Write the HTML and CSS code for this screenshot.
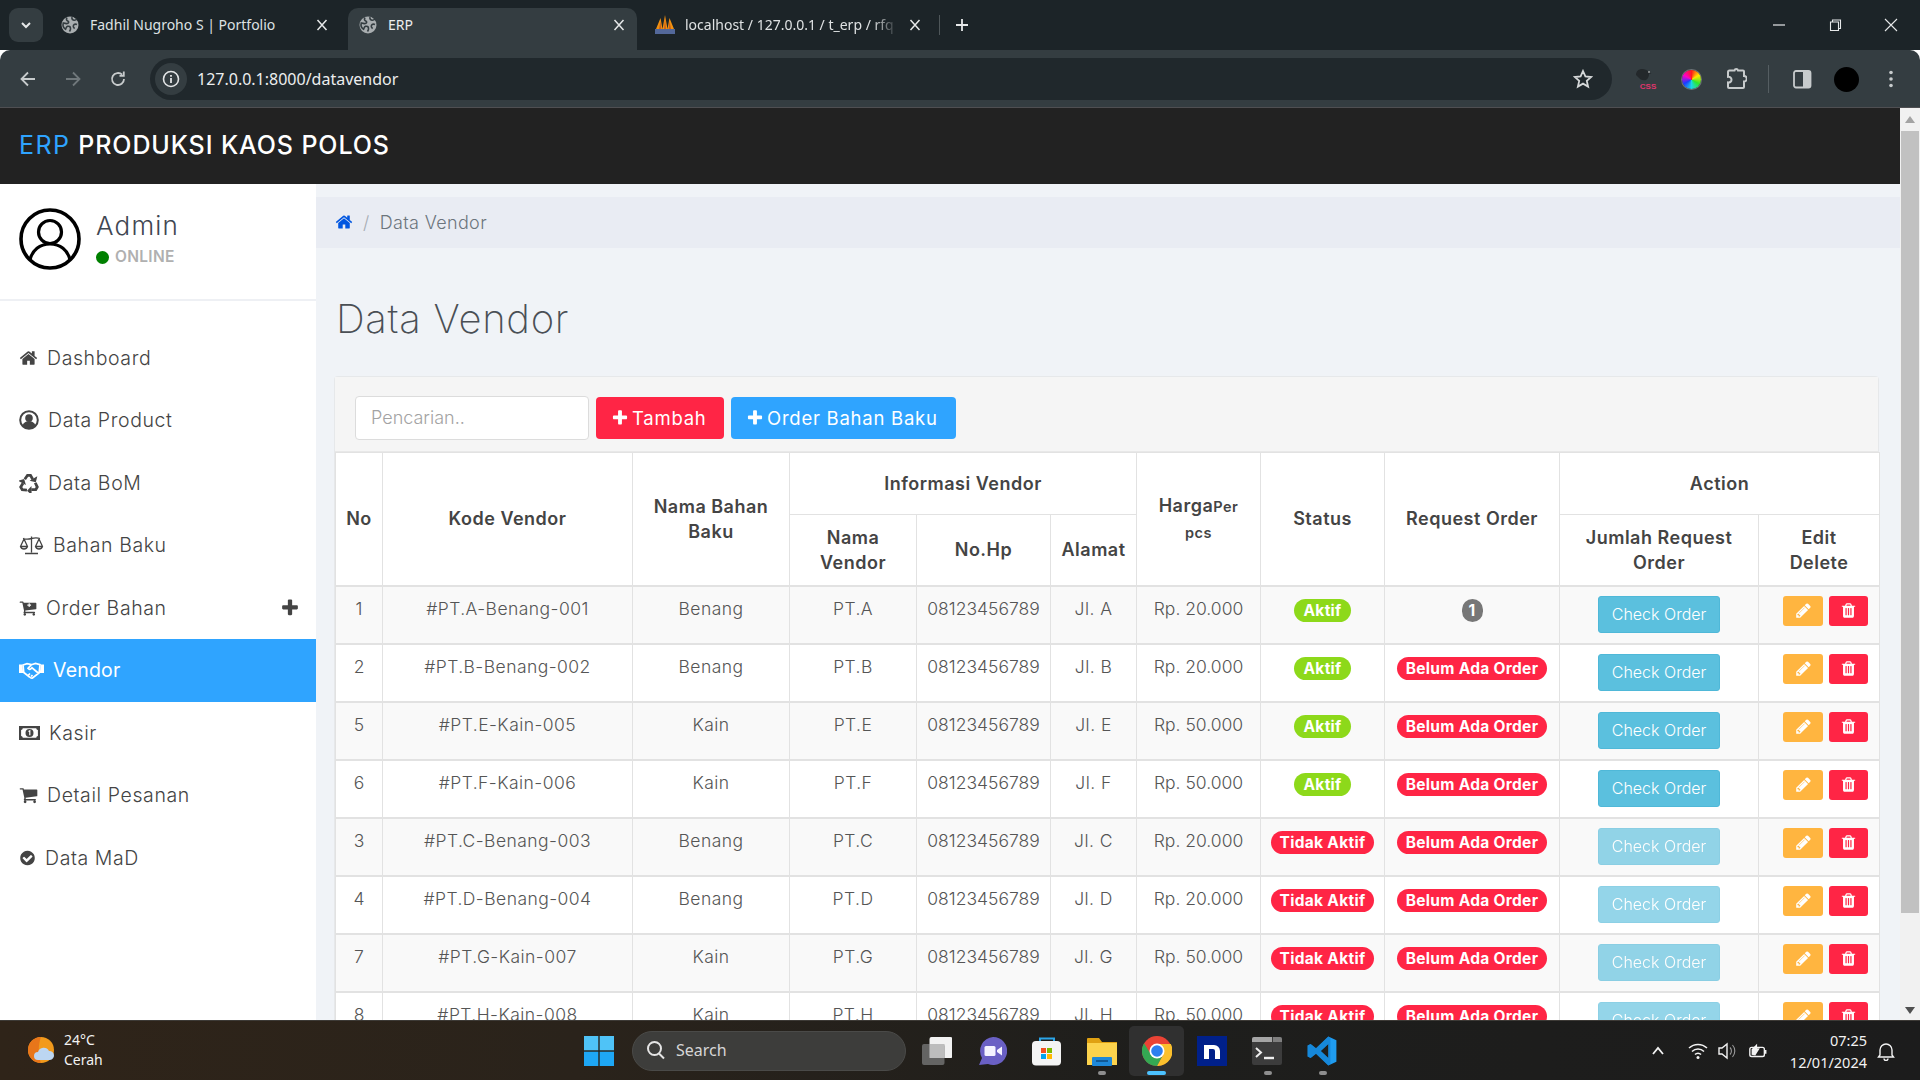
FILE: index.html
```html
<!DOCTYPE html>
<html lang="id">
<head>
<meta charset="utf-8">
<title>ERP</title>
<link rel="stylesheet" href="styles.css">
</head>
<body>
<svg class="defs" aria-hidden="true">
  <symbol id="i-home" viewBox="0 0 1792 1792"><path d="M1472 992v480q0 26-19 45t-45 19h-384v-384h-256v384h-384q-26 0-45-19t-19-45v-480q0-1 .5-3t.5-3l575-474 575 474q1 2 1 6zm223-69l-62 74q-8 9-21 11h-3q-13 0-21-7l-692-577-692 577q-12 8-24 7-13-2-21-11l-62-74q-8-10-7-23.500t11-21.500l719-599q32-26 76-26t76 26l244 204v-195q0-14 9-23t23-9h192q14 0 23 9t9 23v408l219 182q10 8 11 21.500t-7 23.500z"/></symbol>
  <symbol id="i-plus" viewBox="0 0 1792 1792"><path d="M1600 736v192q0 40-28 68t-68 28h-416v416q0 40-28 68t-68 28h-192q-40 0-68-28t-28-68v-416h-416q-40 0-68-28t-28-68v-192q0-40 28-68t68-28h416v-416q0-40 28-68t68-28h192q40 0 68 28t28 68v416h416q40 0 68 28t28 68z"/></symbol>
  <symbol id="i-cart" viewBox="0 0 1792 1792"><path d="M704 1536q0 52-38 90t-90 38-90-38-38-90 38-90 90-38 90 38 38 90zm896 0q0 52-38 90t-90 38-90-38-38-90 38-90 90-38 90 38 38 90zm128-1088v512q0 24-16.500 42.500t-40.500 21.500l-1044 122q13 60 13 70 0 16-24 64h920q26 0 45 19t19 45-19 45-45 19h-1024q-26 0-45-19t-19-45q0-11 8-31.500t16-36 21.500-40 15.500-29.500l-177-823h-204q-26 0-45-19t-19-45 19-45 45-19h256q16 0 28.500 6.500t19.500 15.500 13 24.500 8 26 5.500 29.500 4.500 26h1201q26 0 45 19t19 45z"/></symbol>
  <symbol id="i-check" viewBox="0 0 1792 1792"><path d="M1412 734q0-28-18-46l-91-90q-19-19-45-19t-45 19l-408 407-226-226q-19-19-45-19t-45 19l-91 90q-18 18-18 46 0 27 18 45l362 362q19 19 45 19 27 0 46-19l543-543q18-18 18-45zm252 162q0 209-103 385.500t-279.500 279.500-385.500 103-385.500-103-279.500-279.500-103-385.500 103-385.500 279.500-279.500 385.500-103 385.500 103 279.500 279.500 103 385.500z"/></symbol>
  <symbol id="i-pencil" viewBox="0 0 1792 1792"><path d="M491 1536l91-91-235-235-91 91v107h128v128h107zm523-928q0-22-22-22-10 0-17 7l-542 542q-7 7-7 17 0 22 22 22 10 0 17-7l542-542q7-7 7-17zm-54-192l416 416-832 832h-416v-416zm683 96q0 53-37 90l-166 166-416-416 166-165q36-38 90-38 53 0 91 38l235 234q37 39 37 91z"/></symbol>
  <symbol id="i-trash" viewBox="0 0 1792 1792"><path d="M704 1376v-704q0-14-9-23t-23-9h-64q-14 0-23 9t-9 23v704q0 14 9 23t23 9h64q14 0 23-9t9-23zm256 0v-704q0-14-9-23t-23-9h-64q-14 0-23 9t-9 23v704q0 14 9 23t23 9h64q14 0 23-9t9-23zm256 0v-704q0-14-9-23t-23-9h-64q-14 0-23 9t-9 23v704q0 14 9 23t23 9h64q14 0 23-9t9-23zm-544-992h448l-48-117q-7-9-17-11h-317q-10 2-17 11zm928 32v64q0 14-9 23t-23 9h-96v948q0 83-47 143.500t-113 60.500h-832q-66 0-113-58.500t-47-141.500v-952h-96q-14 0-23-9t-9-23v-64q0-14 9-23t23-9h309l70-167q15-37 54-63t79-26h320q40 0 79 26t54 63l70 167h309q14 0 23 9t9 23z"/></symbol>
  <symbol id="i-globe" viewBox="0 0 18 18"><circle cx="9" cy="9" r="8.500" fill="#a9aeb0"/><path d="M6 1.500c-1 1.800-.5 3 .8 3.600 1.200.5 1 1.700.1 2.200-1.400.8-3 .2-4.600-.3-.8 2.800.2 5 2.300 6.200.6-1.300.7-2.500 2-2.900 1.500-.4 2.700.4 2.900 1.700.2 1.200-.3 2.500-1 3.500M11 1.200c-.3 1.400.2 2.400 1.300 2.800 1.400.5 2.700 0 3.700-1M16 8.500c-1.400-.6-2.900-.4-3.600.8-.7 1.300.3 2.400 1.200 3.300" fill="none" stroke="#343d41" stroke-width="1.600"/></symbol>
  <symbol id="i-close" viewBox="0 0 14 14"><path d="M2.500 2l9 10M11.500 2l-9 10" fill="none" stroke="currentColor" stroke-width="1.500"/></symbol>
  <symbol id="i-recycle" viewBox="0 0 20 20"><g id="rc"><path d="M5.800 6.200L8.500 2.300h3l2.200 3.900" fill="none" stroke="currentColor" stroke-width="2.800"/><path d="M10.600 7.800l6.200 1.500 1.500-6.100z"/></g><path transform="rotate(120 10 11)" d="M5.800 6.200L8.500 2.300h3l2.200 3.900" fill="none" stroke="currentColor" stroke-width="2.800"/><path transform="rotate(120 10 11)" d="M10.600 7.800l6.200 1.500 1.500-6.100z"/><path transform="rotate(240 10 11)" d="M5.800 6.200L8.500 2.300h3l2.200 3.900" fill="none" stroke="currentColor" stroke-width="2.800"/><path transform="rotate(240 10 11)" d="M10.600 7.800l6.200 1.500 1.500-6.100z"/></symbol>
</svg>

<header class="tabstrip">
  <button class="tab-search" type="button" aria-label="Cari tab"><svg class="ic-12" viewBox="0 0 12 12"><path d="M2 4l4 4 4-4" fill="none" stroke="#e6e8e9" stroke-width="2"/></svg></button>
  <div class="tab tab-a">
    <svg class="favicon"><use href="#i-globe"/></svg>
    <span class="tab-title">Fadhil Nugroho S | Portfolio</span>
    <svg class="tab-x"><use href="#i-close"/></svg>
  </div>
  <div class="tab tab-b">
    <svg class="favicon"><use href="#i-globe"/></svg>
    <span class="tab-title">ERP</span>
    <svg class="tab-x"><use href="#i-close"/></svg>
  </div>
  <div class="tab tab-c">
    <svg class="favicon-pma" viewBox="0 0 20 20"><path d="M1 14L5.500 3 7.500 14zM7.500 14L10 0l2.500 14zM12.500 14L14.500 3 19 14z" fill="#f29111"/><path d="M0 14h20v5H0z" fill="#53689a"/><path d="M10 3l1 11H9zM5.500 6l.8 8H4zM14.500 6l1.500 8h-2.300z" fill="#c9611a"/></svg>
    <span class="tab-title tab-fade">localhost / 127.0.0.1 / t_erp / rfq</span>
    <svg class="tab-x"><use href="#i-close"/></svg>
  </div>
  <span class="tab-sep"></span>
  <svg class="tab-plus" viewBox="0 0 14 14"><path d="M7 1v12M1 7h12" fill="none" stroke="#e6e8e9" stroke-width="1.800"/></svg>
  <div class="win-controls">
    <svg class="win-ic" viewBox="0 0 14 14"><path d="M1 7h12" stroke="#e6e8e9" stroke-width="1.200"/></svg>
    <svg class="win-ic" viewBox="0 0 14 14"><path d="M2.500 4h8v8.500h-8zM4.500 4V2h8v8.500h-2" fill="none" stroke="#e6e8e9" stroke-width="1.100"/></svg>
    <svg class="win-ic" viewBox="0 0 14 14"><path d="M1 1l12 12M13 1L1 13" fill="none" stroke="#e6e8e9" stroke-width="1.100"/></svg>
  </div>
</header>

<div class="toolbar">
  <svg class="nav-ic" viewBox="0 0 18 18"><path d="M16 9H3M9 2.500L2.500 9 9 15.500" fill="none" stroke="#c7cbcc" stroke-width="1.800"/></svg>
  <svg class="nav-ic" viewBox="0 0 18 18"><path d="M2 9h13M9 2.500L15.500 9 9 15.500" fill="none" stroke="#70787b" stroke-width="1.800"/></svg>
  <svg class="nav-ic" viewBox="0 0 18 18"><path d="M15 9a6 6 0 1 1-1.800-4.300M14.800 1.500v4.300h-4.300" fill="none" stroke="#c7cbcc" stroke-width="1.800"/></svg>
  <div class="omnibox">
    <span class="site-info"><svg class="ic-18" viewBox="0 0 18 18"><circle cx="9" cy="9" r="7.500" fill="none" stroke="#e3e5e6" stroke-width="1.600"/><path d="M9 8v5M9 5v1.800" stroke="#e3e5e6" stroke-width="1.800"/></svg></span>
    <span class="url">127.0.0.1:8000/datavendor</span>
    <svg class="star" viewBox="0 0 20 20"><path d="M10 2l2.400 5.400 5.800.6-4.400 3.900 1.300 5.700-5.100-3-5.100 3 1.300-5.700L1.800 8l5.800-.6z" fill="none" stroke="#d5d8d9" stroke-width="1.800"/></svg>
  </div>
  <div class="ext-row">
    <span class="ext"><svg class="ic-24" viewBox="0 0 24 24"><path d="M1 8c0-4 3-6 6-6 3 0 5 1 6.500 2.500l3 2.500-2.500-.5c0 3-1 5.500-3 6.500-3 1-6-.5-8-3z" fill="#23282b"/><circle cx="14" cy="5" r=".8" fill="#e8e8e8"/><text x="13" y="21.500" class="css-mark">CSS</text></svg></span>
    <span class="ext ext-wheel"><span class="wheel"></span></span>
    <span class="ext"><svg class="ic-24" viewBox="0 0 24 24"><path d="M10 3.500h1.500a1.800 1.800 0 0 1 3.500 0H20a1 1 0 0 1 1 1V9a2.700 2.700 0 0 1 0 5.500V20a1 1 0 0 1-1 1H6a1 1 0 0 1-1-1v-4.500c2 .3 3.500-1 3.500-2.800S7 9.500 5 9.800V5a1.500 1.500 0 0 1 1.500-1.500z" fill="none" stroke="#c7cbcc" stroke-width="2"/></svg></span>
    <span class="ext-sep"></span>
    <span class="ext"><svg class="ic-24" viewBox="0 0 24 24"><rect x="4" y="4" width="16.500" height="16.500" rx="2" fill="none" stroke="#c7cbcc" stroke-width="1.800"/><path d="M13 4h5.500a2 2 0 0 1 2 2v12.500a2 2 0 0 1-2 2H13z" fill="#c7cbcc"/></svg></span>
    <span class="profile"></span>
    <span class="ext"><svg class="ic-24" viewBox="0 0 24 24"><circle cx="12" cy="5.500" r="1.800" fill="#c7cbcc"/><circle cx="12" cy="12" r="1.800" fill="#c7cbcc"/><circle cx="12" cy="18.500" r="1.800" fill="#c7cbcc"/></svg></span>
  </div>
</div>

<div class="viewport">
  <div class="page">
    <div class="app-header"><span class="brand-a">ERP</span> PRODUKSI KAOS POLOS</div>
    <div class="app-body">
      <aside class="sidebar">
        <div class="user-panel">
          <svg class="avatar" viewBox="0 0 62 62"><circle cx="31" cy="31" r="29" fill="none" stroke="#000" stroke-width="3.600"/><circle cx="31" cy="24" r="11.500" fill="none" stroke="#000" stroke-width="3.200"/><path d="M11 52c2-10 10-16 20-16s18 6 20 16" fill="none" stroke="#000" stroke-width="3.200"/></svg>
          <div class="user-text">
            <div class="user-name">Admin</div>
            <div class="user-status"><span class="dot"></span>ONLINE</div>
          </div>
        </div>
        <nav class="menu">
          <a class="menu-item"><svg class="m-ic w19"><use href="#i-home"/></svg>Dashboard</a>
          <a class="menu-item"><svg class="m-ic w20" viewBox="0 0 20 20"><circle cx="10" cy="10" r="8.800" fill="none" stroke="#444" stroke-width="2"/><circle cx="10" cy="8" r="3.800"/><path d="M3.500 15.500c1-3 3.500-4.500 6.500-4.500s5.500 1.500 6.500 4.500c-1.500 2-3.800 3.500-6.500 3.500s-5-1.500-6.500-3.500z"/></svg>Data Product</a>
          <a class="menu-item"><svg class="m-ic w20"><use href="#i-recycle"/></svg>Data BoM</a>
          <a class="menu-item"><svg class="m-ic w25" viewBox="0 0 25 20"><path d="M12.500 1.500v16M6 18.500h13M4 3.500c3 1 5.500.8 8.500 0s5.500-1 8.500 0M5 4L1.500 11.500a3.700 3.700 0 0 0 7 0zM20 4l-3.500 7.500a3.700 3.700 0 0 0 7 0zM1.500 11.500h7M16.500 11.500h7" fill="none" stroke="#444" stroke-width="1.300"/></svg>Bahan Baku</a>
          <a class="menu-item menu-has-sub"><svg class="m-ic w18" viewBox="0 0 1792 1792"><use href="#i-cart" width="1792" height="1792"/><path d="M960 420v130H830v110h130v130h110V660h130V550h-130V420z" fill="#fff"/></svg>Order Bahan<svg class="m-plus"><use href="#i-plus"/></svg></a>
          <a class="menu-item is-active"><svg class="m-ic w25" viewBox="0 0 25 20"><path d="M0 4.500h3.200l1 8.500H0zM25 4.500h-3.200l-1 8.500H25z"/><path d="M4 5l4-1.300 4.500 1 4-1.300 4.500 1.300-.8 8-6.700 5.300c-1.300.6-2.300-.3-3-1L4.800 12.500zM12.500 4.700L9 8.300c1 1.500 2.700 1.300 4-.5l6.200 5.200M9.500 15l1.500-1.500M12 16.500l1.500-1.500" fill="none" stroke="currentColor" stroke-width="1.700"/></svg>Vendor</a>
          <a class="menu-item"><svg class="m-ic w21" viewBox="0 0 21 16"><path fill-rule="evenodd" d="M0 1h21v14H0zM3.800 3.200a2 2 0 0 1-1.700 1.700v6.200a2 2 0 0 1 1.700 1.700h13.400a2 2 0 0 1 1.700-1.700V4.900a2 2 0 0 1-1.700-1.700z"/><circle cx="10.500" cy="8" r="4"/><path d="M9.500 6.500l1.300-.8v4.500" fill="none" stroke="#fff" stroke-width="1.200"/></svg>Kasir</a>
          <a class="menu-item"><svg class="m-ic w19"><use href="#i-cart"/></svg>Detail Pesanan</a>
          <a class="menu-item"><svg class="m-ic w17"><use href="#i-check"/></svg>Data MaD</a>
        </nav>
      </aside>
      <main class="main">
        <div class="crumb"><svg class="crumb-home"><use href="#i-home"/></svg><span class="crumb-sep">/</span><span>Data Vendor</span></div>
        <h1 class="page-title">Data Vendor</h1>
        <section class="card">
          <div class="card-tools">
            <input class="search" type="text" placeholder="Pencarian..">
            <button class="btn btn-red" type="button"><svg class="btn-plus"><use href="#i-plus"/></svg>Tambah</button>
            <button class="btn btn-blue" type="button"><svg class="btn-plus"><use href="#i-plus"/></svg>Order Bahan Baku</button>
          </div>
          <table class="grid">
            <colgroup>
              <col class="c-no"><col class="c-kode"><col class="c-nama"><col class="c-vendor"><col class="c-hp"><col class="c-alamat"><col class="c-harga"><col class="c-status"><col class="c-req"><col class="c-jml"><col class="c-edit">
            </colgroup>
            <thead>
              <tr class="head-a">
                <th rowspan="2">No</th>
                <th rowspan="2">Kode Vendor</th>
                <th rowspan="2">Nama Bahan Baku</th>
                <th colspan="3">Informasi Vendor</th>
                <th rowspan="2" class="th-harga">Harga<small>Per pcs</small></th>
                <th rowspan="2">Status</th>
                <th rowspan="2">Request Order</th>
                <th colspan="2">Action</th>
              </tr>
              <tr class="head-b">
                <th>Nama Vendor</th><th>No.Hp</th><th>Alamat</th><th>Jumlah Request Order</th><th class="th-edit">Edit Delete</th>
              </tr>
            </thead>
            <tbody>
              <tr><td>1</td><td>#PT.A-Benang-001</td><td>Benang</td><td>PT.A</td><td>08123456789</td><td>Jl. A</td><td>Rp. 20.000</td><td><span class="pill pill-green">Aktif</span></td><td><span class="pill pill-grey">1</span></td><td><a class="btn-check">Check Order</a></td><td><div class="acts"><a class="act act-o"><svg class="act-ic"><use href="#i-pencil"/></svg></a><a class="act act-r"><svg class="act-ic"><use href="#i-trash"/></svg></a></div></td></tr>
              <tr><td>2</td><td>#PT.B-Benang-002</td><td>Benang</td><td>PT.B</td><td>08123456789</td><td>Jl. B</td><td>Rp. 20.000</td><td><span class="pill pill-green">Aktif</span></td><td><span class="pill pill-red">Belum Ada Order</span></td><td><a class="btn-check">Check Order</a></td><td><div class="acts"><a class="act act-o"><svg class="act-ic"><use href="#i-pencil"/></svg></a><a class="act act-r"><svg class="act-ic"><use href="#i-trash"/></svg></a></div></td></tr>
              <tr><td>5</td><td>#PT.E-Kain-005</td><td>Kain</td><td>PT.E</td><td>08123456789</td><td>Jl. E</td><td>Rp. 50.000</td><td><span class="pill pill-green">Aktif</span></td><td><span class="pill pill-red">Belum Ada Order</span></td><td><a class="btn-check">Check Order</a></td><td><div class="acts"><a class="act act-o"><svg class="act-ic"><use href="#i-pencil"/></svg></a><a class="act act-r"><svg class="act-ic"><use href="#i-trash"/></svg></a></div></td></tr>
              <tr><td>6</td><td>#PT.F-Kain-006</td><td>Kain</td><td>PT.F</td><td>08123456789</td><td>Jl. F</td><td>Rp. 50.000</td><td><span class="pill pill-green">Aktif</span></td><td><span class="pill pill-red">Belum Ada Order</span></td><td><a class="btn-check">Check Order</a></td><td><div class="acts"><a class="act act-o"><svg class="act-ic"><use href="#i-pencil"/></svg></a><a class="act act-r"><svg class="act-ic"><use href="#i-trash"/></svg></a></div></td></tr>
              <tr><td>3</td><td>#PT.C-Benang-003</td><td>Benang</td><td>PT.C</td><td>08123456789</td><td>Jl. C</td><td>Rp. 20.000</td><td><span class="pill pill-red">Tidak Aktif</span></td><td><span class="pill pill-red">Belum Ada Order</span></td><td><a class="btn-check is-off">Check Order</a></td><td><div class="acts"><a class="act act-o"><svg class="act-ic"><use href="#i-pencil"/></svg></a><a class="act act-r"><svg class="act-ic"><use href="#i-trash"/></svg></a></div></td></tr>
              <tr><td>4</td><td>#PT.D-Benang-004</td><td>Benang</td><td>PT.D</td><td>08123456789</td><td>Jl. D</td><td>Rp. 20.000</td><td><span class="pill pill-red">Tidak Aktif</span></td><td><span class="pill pill-red">Belum Ada Order</span></td><td><a class="btn-check is-off">Check Order</a></td><td><div class="acts"><a class="act act-o"><svg class="act-ic"><use href="#i-pencil"/></svg></a><a class="act act-r"><svg class="act-ic"><use href="#i-trash"/></svg></a></div></td></tr>
              <tr><td>7</td><td>#PT.G-Kain-007</td><td>Kain</td><td>PT.G</td><td>08123456789</td><td>Jl. G</td><td>Rp. 50.000</td><td><span class="pill pill-red">Tidak Aktif</span></td><td><span class="pill pill-red">Belum Ada Order</span></td><td><a class="btn-check is-off">Check Order</a></td><td><div class="acts"><a class="act act-o"><svg class="act-ic"><use href="#i-pencil"/></svg></a><a class="act act-r"><svg class="act-ic"><use href="#i-trash"/></svg></a></div></td></tr>
              <tr><td>8</td><td>#PT.H-Kain-008</td><td>Kain</td><td>PT.H</td><td>08123456789</td><td>Jl. H</td><td>Rp. 50.000</td><td><span class="pill pill-red">Tidak Aktif</span></td><td><span class="pill pill-red">Belum Ada Order</span></td><td><a class="btn-check is-off">Check Order</a></td><td><div class="acts"><a class="act act-o"><svg class="act-ic"><use href="#i-pencil"/></svg></a><a class="act act-r"><svg class="act-ic"><use href="#i-trash"/></svg></a></div></td></tr>
            </tbody>
          </table>
        </section>
      </main>
    </div>
  </div>
  <div class="scrollbar">
    <span class="sb-up"></span>
    <span class="sb-thumb"></span>
    <span class="sb-down"></span>
  </div>
</div>

<footer class="taskbar">
  <div class="weather">
    <svg class="weather-ic" viewBox="0 0 28 28"><circle cx="14" cy="14" r="13" fill="#f29a1c"/><path d="M14 1a13 13 0 0 0 0 26c-3-8-3-18 0-26z" fill="#e8761a"/><path d="M11 24a4 4 0 0 1 0-8 6 6 0 0 1 11-1 4.500 4.500 0 0 1 1 9z" fill="#bcd6f2"/></svg>
    <div class="weather-text"><div>24°C</div><div>Cerah</div></div>
  </div>
  <div class="task-center">
    <svg class="win-logo" viewBox="0 0 30 30"><path d="M0 0h14.300v14.300H0z" fill="#4fc3f7"/><path d="M15.700 0H30v14.300H15.700z" fill="#4fc3f7"/><path d="M0 15.700h14.300V30H0z" fill="#1ea7f5"/><path d="M15.700 15.700H30V30H15.700z" fill="#1ea7f5"/></svg>
    <div class="task-search"><svg class="ic-20" viewBox="0 0 20 20"><circle cx="8.500" cy="8.500" r="6.500" fill="none" stroke="#e5e5e5" stroke-width="2"/><path d="M13 13.500l5 5" stroke="#e5e5e5" stroke-width="2"/></svg><span>Search</span></div>
    <div class="task-apps">
      <span class="app"><svg class="ic-30" viewBox="0 0 30 30"><rect x="7.500" y="1" width="23" height="21" rx="2" fill="#f2f2f2"/><rect y="8" width="22.500" height="21" rx="2" fill="#6b6b6b" fill-opacity=".9"/><rect x="7.500" y="8" width="15" height="14" fill="#bdbdbd"/></svg></span>
      <span class="app"><svg class="ic-30" viewBox="0 0 30 30"><path d="M16 1a14 14 0 1 1-5 27l-9 1 3-7A14 14 0 0 1 16 1z" fill="#6a60c4"/><rect x="7.500" y="10" width="11" height="10" rx="1.500" fill="#f4f3ff"/><path d="M20 14l5-3.500v9L20 16z" fill="#f4f3ff"/></svg></span>
      <span class="app"><svg class="ic-30" viewBox="0 0 30 30"><path d="M8 8V2.500h14V8" fill="none" stroke="#2ba5e8" stroke-width="2"/><rect y="5" width="29" height="24.500" rx="4" fill="#f4f4f4"/><path d="M9 12h5v5H9z" fill="#f25022"/><path d="M15 12h5v5h-5z" fill="#7fba00"/><path d="M9 18h5v5H9z" fill="#00a4ef"/><path d="M15 18h5v5h-5z" fill="#ffb900"/></svg></span>
      <span class="app app-dot"><svg class="ic-30" viewBox="0 0 30 30"><path d="M0 3a1 1 0 0 1 1-1h11l3 4h15v23H0z" fill="#e0a112"/><path d="M0 7h30v22H0z" fill="#fcd34d"/><rect x="5" y="21" width="20" height="9" rx="1" fill="#1e88d8"/><path d="M9 25h12" stroke="#0d4d86" stroke-width="1.600"/></svg></span>
      <span class="app app-active"><svg class="ic-30" viewBox="0 0 30 30"><circle cx="15" cy="15" r="15" fill="#ea4335"/><path d="M15 8h13.800A15 15 0 0 1 15 30l6.200-11.500z" fill="#fbc02d"/><path d="M2.100 7.300L9 18.500A7 7 0 0 0 21.200 18.500L15 30A15 15 0 0 1 2.100 7.300z" fill="#34a853"/><circle cx="15" cy="15" r="7.500" fill="#fff"/><circle cx="15" cy="15" r="5.800" fill="#2d7ff0"/></svg></span>
      <span class="app"><svg class="ic-30" viewBox="0 0 30 30"><path d="M0 0h30v30H0z" fill="#00208a"/><path d="M7 9h10a6 6 0 0 1 6 6v8h-5v-8a2 2 0 0 0-2-2h-4v10H7z" fill="#fff"/></svg></span>
      <span class="app app-dot"><svg class="ic-30" viewBox="0 0 30 30"><rect y="1" width="30" height="28" rx="2" fill="#3c3c3c"/><path d="M0 3a2 2 0 0 1 2-2h18v5H0z" fill="#a5a5a5"/><path d="M21 1h7a2 2 0 0 1 2 2v3h-9z" fill="#7f7f7f"/><path d="M4 12l5 4.500L4 21" fill="none" stroke="#eee" stroke-width="2"/><path d="M12 22h10" stroke="#eee" stroke-width="2.400"/></svg></span>
      <span class="app app-dot"><svg class="ic-30" viewBox="0 0 100 100"><path d="M71 2L98 14v72L71 98 30 59 12 73 2 68V32l10-5 18 14zM71 27L46 50l25 23z" fill="#1f9cf0"/><path d="M71 2L30 41 12 27 2 32v36l10 5 18-14 41 39 7-4V6z M71 27v46L46 50z" fill="#0f78c8" fill-rule="evenodd" fill-opacity=".55"/></svg></span>
    </div>
  </div>
  <div class="tray">
    <svg class="ic-14" viewBox="0 0 14 14"><path d="M2 10l5-6 5 6" fill="none" stroke="#f2f2f2" stroke-width="1.800"/></svg>
    <svg class="ic-20 tray-wifi" viewBox="0 0 20 20"><path d="M1 7a13 13 0 0 1 18 0M4 10.500a8.500 8.500 0 0 1 12 0M7 13.500a4 4 0 0 1 6 0" fill="none" stroke="#f2f2f2" stroke-width="1.500"/><circle cx="10" cy="16.500" r="1.500" fill="#f2f2f2"/></svg>
    <svg class="ic-20" viewBox="0 0 20 20"><path d="M2 7h3l5-4v14l-5-4H2z" fill="none" stroke="#f2f2f2" stroke-width="1.400"/><path d="M13 6.500a5 5 0 0 1 0 7M15.500 4a9 9 0 0 1 0 12" fill="none" stroke="#9a9a9a" stroke-width="1.100"/></svg>
    <svg class="ic-20 tray-batt" viewBox="0 0 22 20"><rect x="2" y="6" width="16" height="10" rx="2" fill="none" stroke="#f2f2f2" stroke-width="1.500"/><path d="M19.500 9v4" stroke="#f2f2f2" stroke-width="1.600"/><path d="M4 14V8l6-6v5h3l-5 8z" fill="#f2f2f2"/></svg>
    <div class="clock"><div>07:25</div><div>12/01/2024</div></div>
    <svg class="ic-20" viewBox="0 0 20 20"><path d="M4 14V9a6 6 0 0 1 12 0v5l1.500 2h-15zM8 17.500a2 2 0 0 0 4 0" fill="none" stroke="#f2f2f2" stroke-width="1.400"/></svg>
  </div>
</footer>
</body>
</html>
```

FILE: styles.css
```css
* { box-sizing: border-box; }
html, body { margin: 0; height: 100%; }
body {
  display: flex;
  flex-direction: column;
  height: 1080px;
  overflow: hidden;
  font-family: Inter, "Liberation Sans", sans-serif;
  color: #444;
  background: #fff;
}
svg { display: block; flex: none; fill: currentColor; }
.defs { width: 0; height: 0; position: absolute; }
.ic-12 { width: 12px; height: 12px; }
.ic-14 { width: 14px; height: 14px; }
.ic-18 { width: 18px; height: 18px; }
.ic-20 { width: 20px; height: 20px; }
.ic-24 { width: 24px; height: 24px; }
.ic-30 { width: 30px; height: 30px; }

/* Browser tabs */
.tabstrip {
  height: 50px;
  flex: none;
  display: flex;
  align-items: flex-end;
  padding-left: 9px;
  background: #1c2428;
  font-family: "Noto Sans", "Open Sans", sans-serif;
  font-size: 14px;
  color: #dfe2e3;
}
.tab-search {
  align-self: flex-start;
  margin: 8px 7px 0 0;
  width: 34px;
  height: 34px;
  padding: 0;
  border: 0;
  border-radius: 9px;
  background: #343d41;
  display: flex;
  align-items: center;
  justify-content: center;
}
.tab {
  height: 42px;
  display: flex;
  align-items: center;
  gap: 11px;
  padding: 0 11px 9px;
  margin-right: 8px;
  border-radius: 10px 10px 0 0;
}
.tab-a { width: 290px; }
.tab-b { width: 289px; background: #343d41; color: #eceeef; }
.tab-c { width: 288px; padding-left: 10px; gap: 10px; }
.favicon { width: 18px; height: 18px; }
.favicon-pma { width: 20px; height: 20px; }
.tab-title { flex: 1; white-space: nowrap; overflow: hidden; }
.tab-fade { -webkit-mask-image: linear-gradient(90deg, #000 88%, transparent); mask-image: linear-gradient(90deg, #000 88%, transparent); }
.tab-x { width: 14px; height: 14px; color: #e6e8e9; }
.tab-sep { width: 1px; height: 20px; background: #4e5659; align-self: center; margin: 0 15px 0 -2px; }
.tab-plus { width: 14px; height: 14px; align-self: center; }
.win-controls { margin-left: auto; align-self: stretch; display: flex; align-items: center; gap: 42px; padding-right: 22px; }
.win-ic { width: 14px; height: 14px; }

/* Browser toolbar */
.toolbar {
  height: 58px;
  flex: none;
  display: flex;
  align-items: center;
  padding: 1px 0 0 19px;
  background: #343d41;
  border-bottom: 1px solid #4f4f52;
  border-radius: 10px 10px 0 0;
}
.nav-ic { width: 18px; height: 18px; margin-right: 27px; }
.nav-ic:nth-child(3) { margin-right: 23px; }
.omnibox {
  width: 1462px;
  height: 42px;
  display: flex;
  align-items: center;
  border-radius: 21px;
  background: #20282c;
  padding: 0 19px 0 5px;
  color: #eceeef;
  font-family: "Noto Sans", "Open Sans", sans-serif;
  font-size: 16px;
}
.site-info {
  width: 32px;
  height: 32px;
  border-radius: 50%;
  background: #343d41;
  display: flex;
  align-items: center;
  justify-content: center;
  margin-right: 10px;
}
.url { flex: 1; }
.star { width: 20px; height: 20px; }
.ext-row { flex: 1; display: flex; align-items: center; padding-left: 23px; gap: 20px; }
.ext { width: 24px; height: 24px; }
.ext-wheel { display: flex; align-items: center; justify-content: center; }
.wheel { width: 19px; height: 19px; border-radius: 50%; background: conic-gradient(#ff1a1a, #ffe600 60deg, #2ee62e 120deg, #19d8e6 180deg, #1a3dff 240deg, #ff00c8 300deg, #ff1a1a); box-shadow: 0 0 0 1px #6c7376; }
.css-mark { font-size: 8px; font-weight: 700; fill: #e0356d; text-anchor: middle; font-family: "Liberation Sans", sans-serif; }
.ext-sep { width: 1px; height: 28px; background: #555e62; margin: 0 1px; }
.profile { width: 25px; height: 25px; border-radius: 50%; background: #000; }

/* Viewport */
.viewport { flex: 1; min-height: 0; display: flex; overflow: hidden; }
.page { flex: 1; min-width: 0; display: flex; flex-direction: column; }
.app-header {
  height: 76px;
  flex: none;
  display: flex;
  align-items: center;
  gap: 8px;
  padding: 0 0 2px 19px;
  background: #222;
  color: #fff;
  font-size: 25px;
  font-weight: 500;
  letter-spacing: .9px;
}
.brand-a { color: #2fa4ff; font-weight: 400; letter-spacing: 1.4px; }
.app-body { flex: 1; min-height: 0; display: flex; overflow: hidden; }

/* Sidebar */
.sidebar { width: 316px; flex: none; background: #fff; }
.user-panel {
  height: 117px;
  display: flex;
  align-items: center;
  gap: 15px;
  padding: 0 0 5px 19px;
  border-bottom: 2px solid #eef0f4;
}
.avatar { width: 62px; height: 62px; }
.user-name { font-size: 26px; font-weight: 300; line-height: 32px; letter-spacing: 1.2px; color: #3f4752; }
.user-status { display: flex; align-items: center; gap: 6px; margin-top: 4px; font-size: 15.500px; font-weight: 600; line-height: 22px; letter-spacing: .3px; color: #b0b0b0; }
.dot { width: 13px; height: 13px; border-radius: 50%; background: #008000; }
.menu { padding-top: 25.500px; }
.menu-item {
  height: 62.500px;
  display: flex;
  align-items: center;
  gap: 9px;
  padding: 0 16px 0 19px;
  font-size: 19.500px;
  font-weight: 300;
  letter-spacing: .6px;
  color: #444;
}
.menu-item.is-active { background: #2fa4ff; color: #fff; font-weight: 400; letter-spacing: .2px; }
.m-ic { height: 20px; }
.w17 { width: 17px; } .w18 { width: 18px; } .w19 { width: 19px; } .w20 { width: 20px; } .w21 { width: 21px; } .w25 { width: 25px; }
.m-plus { width: 20px; height: 20px; margin-left: auto; color: #444; }

/* Main */
.main { flex: 1; min-width: 0; padding: 13px 20px 0; background: #f0f3f7; }
.crumb {
  height: 51px;
  margin: 0 -20px;
  padding: 0 0 1px 19px;
  display: flex;
  align-items: center;
  background: #e9ecf3;
  font-size: 18px;
  font-weight: 300;
  letter-spacing: .35px;
  color: #6c757d;
}
.crumb-home { width: 18px; height: 18px; color: #0056e0; }
.crumb-sep { margin: 0 10px; color: #a7adb3; }
.page-title { margin: 0; height: 128px; padding-top: 48px; font-size: 40px; line-height: 46px; font-weight: 200; letter-spacing: .7px; color: #4a4f55; }
.card { width: 1545px; margin-left: -2px; border: 1px solid #e6e8ea; border-bottom: 0; border-radius: 4px 4px 0 0; background: #fff; }
.card-tools {
  height: 75px;
  display: flex;
  align-items: center;
  gap: 7px;
  padding: 7px 20px 0;
  background: #f5f5f5;
  border-bottom: 1px solid #e8e8e8;
}
.search {
  width: 234px;
  height: 44px;
  padding: 0 15px;
  border: 1px solid #dcdcdc;
  border-radius: 4px;
  background: #fff;
  font: 300 18px Inter, sans-serif;
  outline: 0;
}
.search::placeholder { color: #a3a3a3; }
.btn {
  height: 42px;
  display: flex;
  align-items: center;
  gap: 3px;
  padding: 0 15px;
  border: 0;
  border-radius: 4px;
  color: #fff;
  font: 400 18.500px Inter, sans-serif;
  letter-spacing: .75px;
}
.btn-plus { width: 18px; height: 18px; }
.btn-red { width: 128px; background: #ff2545; }
.btn-blue { width: 225px; background: #2fa4ff; }

/* Table */
.grid { width: 1544px; table-layout: fixed; border-collapse: collapse; background: #fff; }
.c-no { width: 47px; } .c-kode { width: 250px; } .c-nama { width: 157px; } .c-vendor { width: 127px; }
.c-hp { width: 134px; } .c-alamat { width: 86px; } .c-harga { width: 124px; } .c-status { width: 124px; }
.c-req { width: 175px; } .c-jml { width: 199px; } .c-edit { width: 121px; }
.grid th, .grid td { border: 1px solid #e2e2e2; text-align: center; padding: 0 4px; }
.grid thead th { font-size: 18px; font-weight: 600; line-height: 25px; letter-spacing: .5px; color: #444; vertical-align: middle; }
.grid thead tr:last-child th, .grid thead th[rowspan] { border-bottom-width: 2px; }
.grid thead th.th-harga { padding: 0 16px; }
.grid thead th.th-edit { padding: 0 20px; }
.head-a { height: 62px; }
.head-b { height: 71px; }
.grid small { font-size: 14.500px; font-weight: 600; line-height: 25px; }
.grid tbody tr { height: 58px; }
.grid tbody tr:nth-child(odd) { background: #f9f9f9; }
.grid td { padding-top: 8px; padding-bottom: 0; vertical-align: top; font-size: 17.500px; line-height: 27px; font-weight: 300; color: #555; border-bottom-width: 2px; }
.grid td:nth-child(2), .grid td:nth-child(3), .grid td:nth-child(4), .grid td:nth-child(6) { letter-spacing: .45px; }
.pill {
  display: inline-block;
  height: 23px;
  margin-top: 4px;
  padding: 0 9px;
  border-radius: 12px;
  color: #fff;
  font-size: 15.500px;
  font-weight: 700;
  line-height: 23px;
  letter-spacing: .3px;
  vertical-align: top;
  white-space: nowrap;
}
.pill-green { background: #8dd91a; }
.pill-red { background: #ff2545; }
.pill-grey { background: #777; padding: 0 7px; }
.btn-check {
  display: block;
  width: 122px;
  height: 37px;
  margin: 1px auto 0;
  border: 1px solid #4fb8d8;
  border-radius: 3px;
  background: #5bc0de;
  color: #fff;
  font-size: 16px;
  font-weight: 300;
  line-height: 35px;
}
.btn-check.is-off { opacity: .65; }
.acts { display: flex; justify-content: flex-end; gap: 6px; margin-top: 1px; padding-right: 7px; }
.act { width: 40px; height: 30px; display: flex; align-items: center; justify-content: center; border-radius: 3px; color: #fff; }
.act-o { background: #ffb540; }
.act-r { background: #ff2545; width: 39px; }
.act-ic { width: 17px; height: 17px; }

/* Scrollbar */
.scrollbar { width: 20px; flex: none; display: flex; flex-direction: column; align-items: center; background: #f1f1f1; padding-top: 8px; }
.sb-up { width: 0; height: 0; border: 5px solid transparent; border-top: 0; border-bottom: 7px solid #a3a3a3; margin-bottom: 8px; }
.sb-thumb { width: 18px; height: 782px; background: #c1c1c1; }
.sb-down { width: 0; height: 0; border: 5px solid transparent; border-bottom: 0; border-top: 7px solid #505050; margin-top: auto; margin-bottom: 6px; }

/* Taskbar */
.taskbar {
  height: 60px;
  flex: none;
  display: grid;
  grid-template-columns: 584px 1fr auto;
  align-items: center;
  background: linear-gradient(90deg, #2f2419 0%, #2a231b 30%, #1e1e1c 60%, #1c1c1c 100%);
  border-top: 1px solid #3d3a36;
  color: #f2f2f2;
  font-family: "Noto Sans", "Open Sans", sans-serif;
  font-size: 14px;
}
.weather { display: flex; align-items: center; gap: 9px; padding: 0 0 2px 27px; }
.weather-ic { width: 28px; height: 28px; }
.weather-text { line-height: 20px; }
.task-center { display: flex; align-items: center; }
.win-logo { width: 30px; height: 30px; }
.task-search {
  width: 274px;
  height: 40px;
  margin-left: 18px;
  display: flex;
  align-items: center;
  gap: 10px;
  padding: 0 0 1px 13px;
  border-radius: 20px;
  background: #3d3d3b;
  border: 1px solid #4a4a48;
  font-size: 16px;
  color: #d6d6d6;
}
.task-apps { display: flex; align-items: center; margin-left: 3px; }
.app { position: relative; width: 55.100px; height: 50px; display: flex; align-items: center; justify-content: center; border-radius: 5px; }
.app-active { background: #303030; }
.app-active::after { content: ""; position: absolute; left: 18px; right: 18px; bottom: 1px; height: 4px; border-radius: 2px; background: #4cc2ff; }
.app-dot::after { content: ""; position: absolute; left: 24px; bottom: 1px; width: 8px; height: 4px; border-radius: 2px; background: #8e8e8e; }
.tray { display: flex; align-items: center; gap: 9px; padding-right: 24px; }
.tray-wifi { margin-left: 14px; }
.tray-batt { margin-left: 2px; }
.clock { width: 90px; text-align: right; line-height: 22px; font-size: 14.500px; }
```
